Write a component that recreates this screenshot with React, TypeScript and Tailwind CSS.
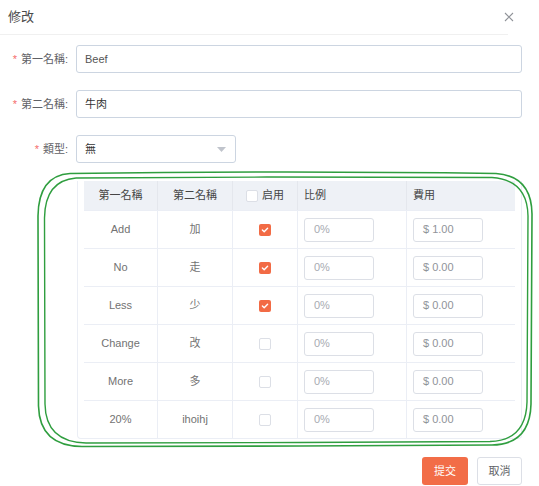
import React from "react";

type Row = { first: string; second: string; enabled: boolean; ratio: string; fee: string };

const rows: Row[] = [
  { first: "Add", second: "加", enabled: true, ratio: "0%", fee: "$ 1.00" },
  { first: "No", second: "走", enabled: true, ratio: "0%", fee: "$ 0.00" },
  { first: "Less", second: "少", enabled: true, ratio: "0%", fee: "$ 0.00" },
  { first: "Change", second: "改", enabled: false, ratio: "0%", fee: "$ 0.00" },
  { first: "More", second: "多", enabled: false, ratio: "0%", fee: "$ 0.00" },
  { first: "20%", second: "ihoihj", enabled: false, ratio: "0%", fee: "$ 0.00" },
];

function Checkbox({ checked }: { checked: boolean }) {
  if (checked) {
    return (
      <span className="flex h-[12px] w-[12px] items-center justify-center rounded-[2px] bg-[#f26b45]">
        <svg width="8" height="8" viewBox="0 0 8 8" fill="none">
          <path d="M1.4 4.1 L3.2 5.8 L6.6 2.3" stroke="white" strokeWidth="1.4" strokeLinecap="round" strokeLinejoin="round" />
        </svg>
      </span>
    );
  }
  return <span className="block h-[12px] w-[12px] rounded-[2px] border border-[#dcdfe6] bg-white" />;
}

function FormItem({ label, children }: { label: string; children: React.ReactNode }) {
  return (
    <div className="flex h-[28px] items-center">
      <label className="w-[68px] text-right text-[11px] text-[#5f6166]">
        <span className="mr-[4px] text-[#f56c6c]">*</span>
        {label}
      </label>
      <div className="ml-[8px] flex flex-1">{children}</div>
    </div>
  );
}

function Annotation() {
  return (
    <svg className="pointer-events-none absolute inset-0" width="539" height="486" viewBox="0 0 539 486" fill="none">
      <path
        d="M70 173.5 C180 172, 360 171.5, 496 173.5 Q531.5 176 532 214 L531 404 Q530 444.5 492 445 L300 446 L82 446.5 Q39.5 446 38.5 406 L38 216 Q38.5 175.5 70 173.5"
        stroke="#2f9e3f"
        strokeWidth="1.6"
      />
      <path
        d="M76 178 C200 177, 380 176.5, 492 177.5 Q527.5 180 528 216 L527 402 Q526 440.5 490 441.5 L300 442.5 L86 443 Q45.5 442 45 404 L44.5 218 Q45 180.5 76 178"
        stroke="#2f9e3f"
        strokeWidth="1.4"
      />
    </svg>
  );
}

export default function App() {
  return (
    <div
      className="relative h-[486px] w-[539px] overflow-hidden bg-white"
      style={{ fontFamily: '"Liberation Sans", "Noto Sans CJK TC", sans-serif' }}
    >
      <div className="flex h-[35px] w-[508px] items-center justify-between border-b border-[#f0f0f0] pl-[8px]">
        <span className="text-[13px] text-[#4a4a4a]">修改</span>
        <svg width="10" height="10" viewBox="0 0 10 10" className="mr-[-6px]">
          <path d="M1 1 L9 9 M9 1 L1 9" stroke="#909399" strokeWidth="1.1" />
        </svg>
      </div>

      <div className="flex flex-col gap-[17px] pr-[17px] pt-[10px]">
        <FormItem label="第一名稱:">
          <div className="flex h-[28px] flex-1 items-center rounded-[3px] border border-[#ccd5e1] px-[8px] text-[11px] text-[#555]">
            Beef
          </div>
        </FormItem>
        <FormItem label="第二名稱:">
          <div className="flex h-[28px] flex-1 items-center rounded-[3px] border border-[#ccd5e1] px-[8px] text-[11px] text-[#333]">
            牛肉
          </div>
        </FormItem>
        <FormItem label="類型:">
          <div className="flex h-[28px] w-[160px] items-center justify-between rounded-[3px] border border-[#ccd5e1] pl-[8px] pr-[9px] text-[11px] text-[#333]">
            <span>無</span>
            <svg width="9" height="5" viewBox="0 0 9 5">
              <path d="M0 0 L9 0 L4.5 5 Z" fill="#c0c4cc" />
            </svg>
          </div>
        </FormItem>

        <div className="ml-[77px] mt-[1px] rounded-b-[4px] border-x border-b border-[#ebeef5] px-[6px]">
          <div className="flex h-[30px] items-center border-b border-[#ebeef5] bg-[#eef1f6] text-[11px] text-[#454545]">
            <div className="flex h-full w-[74px] items-center justify-center border-r border-[#e4e7ed]">第一名稱</div>
            <div className="flex h-full w-[75px] items-center justify-center border-r border-[#e4e7ed]">第二名稱</div>
            <div className="flex h-full w-[65px] items-center justify-center gap-[4px] border-r border-[#e4e7ed]">
              <Checkbox checked={false} />
              <span>启用</span>
            </div>
            <div className="flex h-full w-[109px] items-center border-r border-[#e4e7ed] pl-[6px]">比例</div>
            <div className="flex h-full flex-1 items-center pl-[6px]">費用</div>
          </div>
          {rows.map((row, i) => (
            <div
              key={i}
              className={
                i === rows.length - 1
                  ? "flex h-[37px] items-center text-[11px] text-[#727272]"
                  : "flex h-[38px] items-center border-b border-[#ebeef5] text-[11px] text-[#727272]"
              }
            >
              <div className="flex h-full w-[74px] items-center justify-center border-r border-[#ebeef5]">{row.first}</div>
              <div className="flex h-full w-[75px] items-center justify-center border-r border-[#ebeef5]">{row.second}</div>
              <div className="flex h-full w-[65px] items-center justify-center border-r border-[#ebeef5]">
                <Checkbox checked={row.enabled} />
              </div>
              <div className="flex h-full w-[109px] items-center border-r border-[#ebeef5] pl-[6px]">
                <div className="flex h-[24px] w-[70px] items-center rounded-[3px] border border-[#dcdfe6] pl-[9px] text-[#a8abb2]">
                  {row.ratio}
                </div>
              </div>
              <div className="flex h-full flex-1 items-center pl-[6px]">
                <div className="flex h-[24px] w-[70px] items-center rounded-[3px] border border-[#dcdfe6] pl-[9px] text-[#909399]">
                  {row.fee}
                </div>
              </div>
            </div>
          ))}
        </div>

        <div className="mt-[1px] flex justify-end gap-[9px]">
          <button className="h-[28px] w-[46px] rounded-[3px] bg-[#f26d47] text-[11px] text-white">提交</button>
          <button className="h-[28px] w-[45px] rounded-[3px] border border-[#dcdfe6] bg-white text-[11px] text-[#606266]">取消</button>
        </div>
      </div>

      <Annotation />
    </div>
  );
}
